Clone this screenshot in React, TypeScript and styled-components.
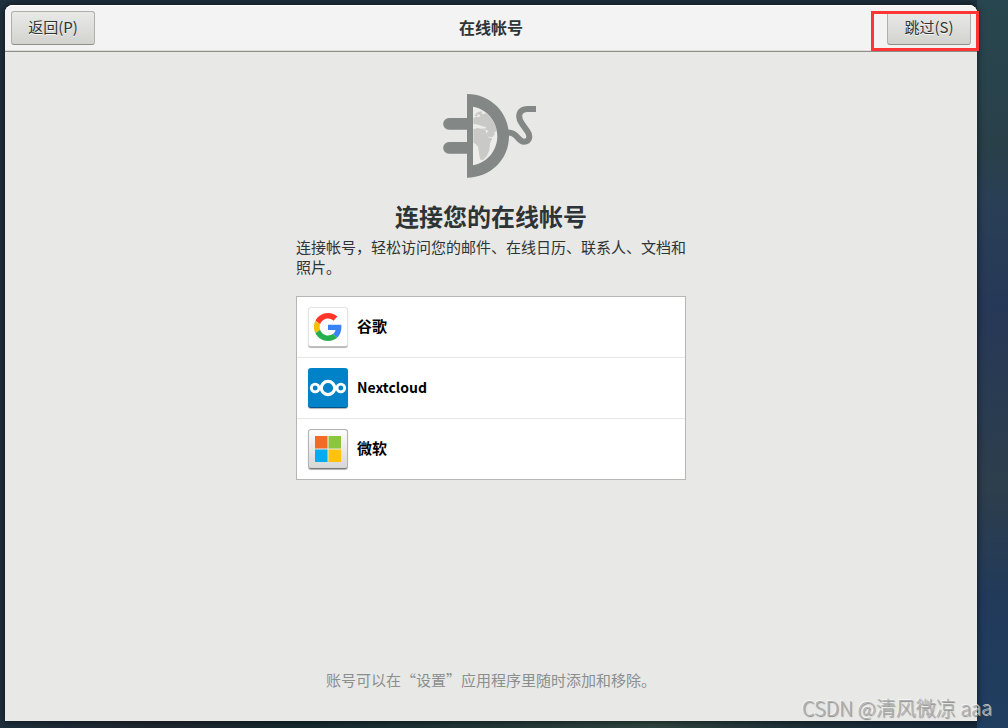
import React from 'react';
import styled, { createGlobalStyle, css } from 'styled-components';

const GlobalStyle = createGlobalStyle`
  * { box-sizing: border-box; }
  body {
    margin: 0;
    color: #2e3436;
    font-family: "Noto Sans CJK SC", sans-serif;
    font-size: 15px;
    line-height: 20px;
  }
  button { font-family: inherit; }
`;

const Desktop = styled.div`
  position: relative;
  display: flex;
  min-height: 100vh;
  padding: 5px 31px 7px 5px;
  background:
    linear-gradient(to bottom, #28464f 0%, #294049 20%, #293f56 28%, #263857 42%, #2d3e4c 67%, #223a5a 82%, #1f3e60 100%) right / 31px 100% no-repeat,
    linear-gradient(to right, #1e2f3d 0%, #20262f 15%, #15292f 30%, #2f443f 65%, #1d2f38 80%, #15263c 100%) bottom / 100% 7px no-repeat,
    #1e303e;
`;

const Dialog = styled.section`
  display: flex;
  flex: 1;
  flex-direction: column;
  background: #e8e8e6;
  border-radius: 8px 8px 0 0;
  box-shadow: 0 0 6px 1px rgba(0, 0, 0, 0.5);
`;

const HeaderBar = styled.header`
  display: grid;
  grid-template-columns: 1fr auto 1fr;
  align-items: center;
  height: 47px;
  padding: 0 6px;
  background: #f3f3f3;
  border-bottom: 1px solid #8f8f8a;
  border-radius: 8px 8px 0 0;
  box-shadow: inset 0 1px #fff, inset 0 -1px #dcdcda;
`;

const HeaderTitle = styled.h1`
  margin: 0;
  padding-bottom: 3px;
  font-size: 16px;
  line-height: 24px;
  font-weight: 700;
`;

const Slot = styled.div<{ $end?: boolean }>`
  position: relative;
  justify-self: ${(p) => (p.$end ? 'end' : 'start')};
`;

const HeaderButton = styled.button`
  display: block;
  height: 34px;
  min-width: 84px;
  padding: 0 16px 2px;
  color: #2e3436;
  font-size: 15px;
  line-height: 20px;
  background: linear-gradient(#e9e9e7, #d2d2cf);
  border: 1px solid #b0b0aa;
  border-bottom-color: #8f8f8a;
  border-radius: 3px;
  text-shadow: 0 1px #f6f6f5;
`;

const Highlight = styled.span`
  position: absolute;
  inset: 0 -8px -6px -16px;
  border: 3px solid #fd3535;
  pointer-events: none;
`;

const Content = styled.main`
  display: flex;
  flex: 1;
  flex-direction: column;
  align-items: center;
  padding: 42px 16px 31px;
`;

const PlugArt = styled.svg`
  width: 96px;
  height: 84px;
`;

const Heading = styled.h2`
  margin: 22px 0 5px;
  font-size: 24px;
  line-height: 32px;
  font-weight: 700;
`;

const Column = styled.div`
  width: 100%;
  max-width: 390px;
`;

const Intro = styled.p`
  margin: 0 0 19px;
`;

const ProviderList = styled.ul`
  margin: 0;
  padding: 0;
  list-style: none;
  background: #fff;
  border: 1px solid #b6b6b3;
`;

const ProviderItem = styled.li`
  & + & { border-top: 1px solid #e6e6e4; }
`;

const ProviderButton = styled.button`
  display: flex;
  align-items: center;
  gap: 9px;
  width: 100%;
  height: 60px;
  padding: 0 11px;
  color: #000;
  text-align: left;
  background: none;
  border: 0;
`;

type Brand = 'google' | 'nextcloud' | 'microsoft';

const tiles = {
  google: css`
    background: #fff;
    border: 1px solid #e4e4e2;
    border-bottom-color: #c0bfb8;
  `,
  nextcloud: css`
    background: #0082c9;
    border-bottom: 1px solid #00568a;
  `,
  microsoft: css`
    background: linear-gradient(#fdfdfd, #d6d6d6);
    border: 1px solid #b2b2b2;
    border-bottom-color: #777;
  `,
};

const Tile = styled.span<{ $brand: Brand }>`
  display: grid;
  place-items: center;
  flex: none;
  width: 40px;
  height: 40px;
  border-radius: 3px;
  box-shadow: 0 1px 1px rgba(0, 0, 0, 0.3);
  ${(p) => tiles[p.$brand]}
`;

const ProviderName = styled.span<{ $latin?: boolean }>`
  padding-bottom: 2px;
  font-size: ${(p) => (p.$latin ? 14 : 15)}px;
  line-height: 20px;
  font-weight: 700;
`;

const Footnote = styled.p`
  margin: auto 0 0;
  color: #8b8e8f;
`;

const Watermark = styled.span`
  position: absolute;
  right: 15px;
  bottom: 5px;
  color: #aeb0b1;
  font-size: 20px;
  line-height: 30px;
  font-weight: 300;
  white-space: nowrap;
  text-shadow: 1px 1px 1px rgba(70, 70, 70, 0.6), -1px -1px 0 rgba(250, 250, 250, 0.7);
`;

const Plug = () => (
  <PlugArt viewBox="39 27 288 252" aria-hidden="true">
    <path fill="#ececea" d="M129 65C170 72 202 108 202 153S170 234 129 241Z" />
    <g fill="#c9c9c8">
      <path d="M134 93C137 82 148 78 158 80L154 85L160 88L167 84C185 97 197 117 200 138L193 142L194 149L187 156L178 157L171 150L169 144L176 139L171 136L160 132L149 125L135 121L130 117V99L139 95L147 97L151 91L144 88L141 94Z" />
      <path d="M130 132L143 129L156 132L166 134L169 145L177 158L187 160L180 175L178 196L170 214L158 226L150 223L147 204L144 185L137 177L130 173Z" />
    </g>
    <path fill="#ececea" d="M130 117L145 119L157 124L168 126L166 131L154 129L142 127L130 132Z" />
    <path
      fill="#838786"
      fillRule="evenodd"
      d="M111 27C181 27 237 82 237 153S181 278 111 278ZM129 65V241C170 234 202 198 202 153S170 72 129 65Z"
    />
    <path fill="#838786" d="M57 99H115V134H57A17.5 17.5 0 0 1 57 99ZM57 171H115V206H57A17.5 17.5 0 0 1 57 171Z" />
    <path
      fill="none"
      stroke="#838786"
      strokeWidth="18"
      d="M232 143C262 140 263 170 282 170C299 170 302 153 292 139L276 116C260 94 268 72 292 72H318"
    />
  </PlugArt>
);

const BrandMark = ({ brand }: { brand: Brand }) => {
  if (brand === 'google') {
    return (
      <svg width="28" height="28" viewBox="0 0 48 48" aria-hidden="true">
        <path fill="#ff3528" d="M24 9.5c3.5 0 6.700 1.200 9.200 3.600l6.900-6.900C35.900 2.400 30.500 0 24 0 14.600 0 6.500 5.400 2.600 13.200l8 6.200C12.400 13.700 17.700 9.500 24 9.500z" />
        <path fill="#3a83f7" d="M47 24.500c0-1.600-.2-3.100-.4-4.500H24v9h12.900c-.6 3-2.300 5.500-4.700 7.200l7.700 6C44.400 38 47 31.800 47 24.500z" />
        <path fill="#fbbc05" d="M10.500 28.600a14.500 14.500 0 0 1 0-9.200l-8-6.200a24 24 0 0 0 0 21.600l8-6.200z" />
        <path fill="#25b050" d="M24 48c6.500 0 11.900-2.100 15.900-5.800l-7.700-6c-2.200 1.500-4.900 2.300-8.200 2.300-6.300 0-11.600-4.200-13.500-9.900l-8 6.200C6.500 42.600 14.600 48 24 48z" />
      </svg>
    );
  }
  if (brand === 'nextcloud') {
    return (
      <svg width="40" height="20" viewBox="0 0 40 20" fill="none" stroke="#fff" aria-hidden="true">
        <circle cx="20" cy="10" r="6.700" strokeWidth="3.200" />
        <circle cx="7.200" cy="10" r="3.900" strokeWidth="2.900" />
        <circle cx="32.800" cy="10" r="3.900" strokeWidth="2.900" />
      </svg>
    );
  }
  return (
    <svg width="26" height="26" viewBox="0 0 26 26" aria-hidden="true">
      <path fill="#f46a25" d="M0 0h12.500v12.500H0z" />
      <path fill="#8cc63f" d="M13.500 0H26v12.500H13.500z" />
      <path fill="#00adef" d="M0 13.500h12.500V26H0z" />
      <path fill="#ffc20e" d="M13.500 13.500H26V26H13.500z" />
    </svg>
  );
};

const providers: { brand: Brand; name: string; latin?: boolean }[] = [
  { brand: 'google', name: '谷歌' },
  { brand: 'nextcloud', name: 'Nextcloud', latin: true },
  { brand: 'microsoft', name: '微软' },
];

export default function App() {
  return (
    <>
      <GlobalStyle />
      <Desktop lang="zh-CN">
        <Dialog>
          <HeaderBar>
            <Slot>
              <HeaderButton type="button">返回(P)</HeaderButton>
            </Slot>
            <HeaderTitle>在线帐号</HeaderTitle>
            <Slot $end>
              <HeaderButton type="button">跳过(S)</HeaderButton>
              <Highlight />
            </Slot>
          </HeaderBar>
          <Content>
            <Plug />
            <Heading>连接您的在线帐号</Heading>
            <Column>
              <Intro>连接帐号，轻松访问您的邮件、在线日历、联系人、文档和照片。</Intro>
              <ProviderList>
                {providers.map(({ brand, name, latin }) => (
                  <ProviderItem key={brand}>
                    <ProviderButton type="button">
                      <Tile $brand={brand}>
                        <BrandMark brand={brand} />
                      </Tile>
                      <ProviderName $latin={latin}>{name}</ProviderName>
                    </ProviderButton>
                  </ProviderItem>
                ))}
              </ProviderList>
            </Column>
            <Footnote>账号可以在“设置”应用程序里随时添加和移除。</Footnote>
          </Content>
        </Dialog>
        <Watermark>CSDN @清风微凉 aaa</Watermark>
      </Desktop>
    </>
  );
}
